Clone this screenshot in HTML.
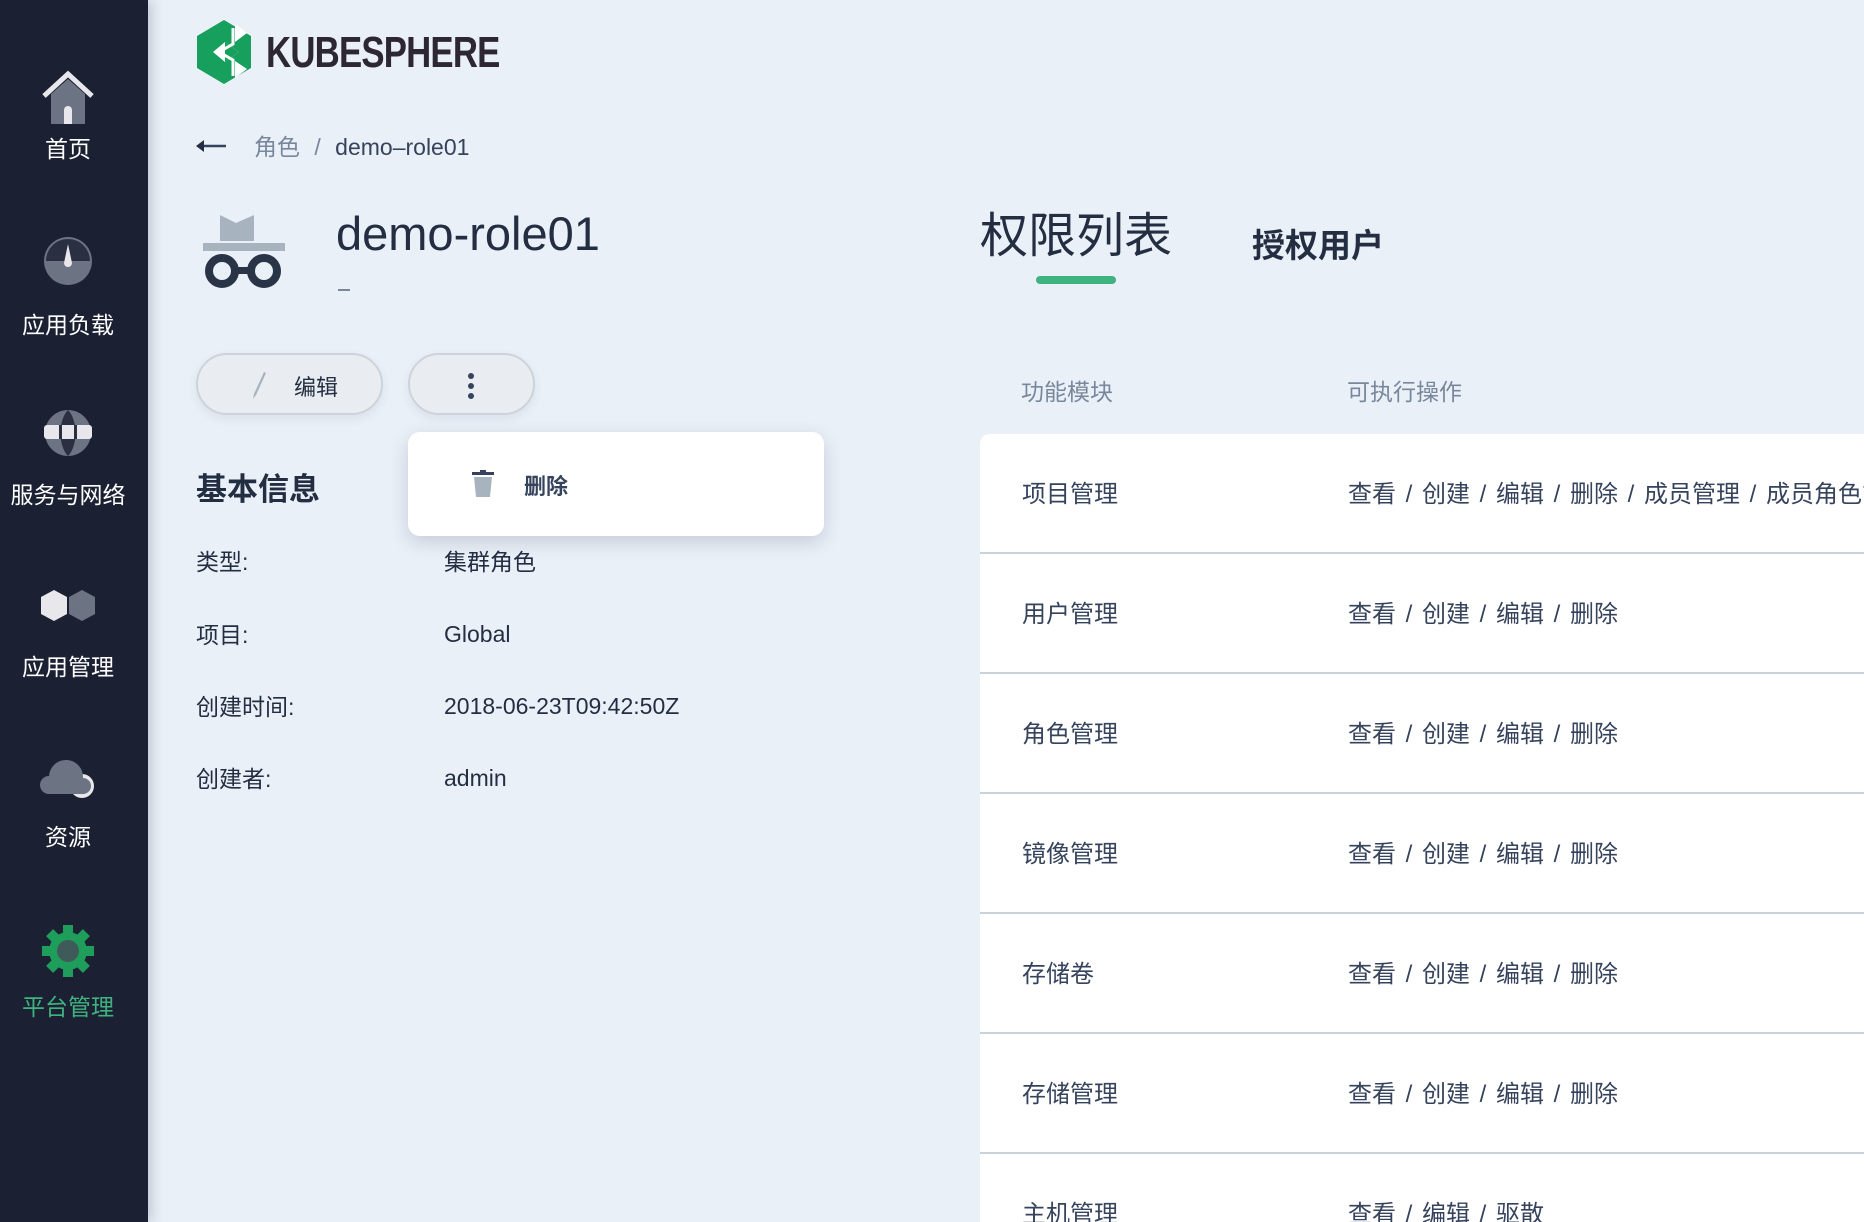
<!DOCTYPE html>
<html style="width:1864px;height:1222px;overflow:hidden"><head><meta charset="utf-8"><style>
*{margin:0;padding:0;box-sizing:border-box}
body{width:1864px;height:1222px;overflow:hidden;background:#eaf0f8;font-family:"Liberation Sans","Noto Sans CJK SC",sans-serif;color:#242e42;position:relative}
.side{position:absolute;left:0;top:0;width:148px;height:1222px;background:#1b2133;box-shadow:4px 0 12px rgba(30,40,60,.2)}
.nav{position:absolute;left:0;width:136px;text-align:center;color:#fff;font-size:23px}
.nav svg{display:block;margin:0 auto}
.a{position:absolute}
.btn{position:absolute;border:2px solid #ccd3db;border-radius:32px;background:#e9edf1;box-shadow:0 4px 10px rgba(36,46,66,.08)}
.lbl{position:absolute;left:196px;font-size:23px;color:#242e42}
.val{position:absolute;left:444px;font-size:23px;color:#242e42}
.card{position:absolute;left:980px;top:434px;width:900px;height:788px;background:#fff;border-radius:10px 0 0 0;overflow:hidden}
.row{position:absolute;left:0;width:900px;height:120px;border-bottom:2px solid #c9d1da}
.row span{position:absolute;top:40px;font-size:24px;color:#36435c;word-spacing:3px;white-space:nowrap}
</style></head><body>
<div class="side">
 <div class="nav" style="top:70px"><svg width="56" height="56" viewBox="0 0 56 56"><path d="M4 26 L28 4 L52 26" fill="none" stroke="#e8e8ec" stroke-width="5"/><path d="M11 24 L28 9 L45 24 V54 H11Z" fill="#6c7382"/><path d="M24 54 V40 a4 4 0 0 1 8 0 V54Z" fill="#e8e8ec"/></svg><div style="margin-top:4px">首页</div></div>
 <div class="nav" style="top:236px"><svg width="50" height="50" viewBox="0 0 50 50"><circle cx="25" cy="25" r="24" fill="#6c7382"/><path d="M3 25 a22 22 0 0 1 44 0Z" fill="#2a3042"/><path d="M25 8 L29 27 a4 4 0 0 1 -8 0Z" fill="#e8e8ec"/></svg><div style="margin-top:20px">应用负载</div></div>
 <div class="nav" style="top:408px"><svg width="52" height="50" viewBox="0 0 52 50"><circle cx="26" cy="25" r="23" fill="#6c7382"/><path d="M26 2 C16 12 16 38 26 48 C36 38 36 12 26 2Z" fill="#2a3042"/><rect x="2" y="17" width="48" height="14" rx="3" fill="#e8e8ec"/><rect x="17" y="17" width="3" height="14" fill="#2a3042"/><rect x="32" y="17" width="3" height="14" fill="#2a3042"/></svg><div style="margin-top:18px">服务与网络</div></div>
 <div class="nav" style="top:588px"><svg width="58" height="36" viewBox="0 0 58 36"><path d="M2 9 L15 2 L28 9 V26 L15 33 L2 26Z" fill="#e8e8ec"/><path d="M30 9 L43 2 L56 9 V26 L43 33 L30 26Z" fill="#6c7382"/></svg><div style="margin-top:24px">应用管理</div></div>
 <div class="nav" style="top:756px"><svg width="58" height="42" viewBox="0 0 58 42"><circle cx="43" cy="30" r="12" fill="#e8e8ec"/><path d="M10 38 a9 9 0 0 1 0 -18 a17 17 0 0 1 34 2 a8 8 0 0 1 0 16Z" fill="#6c7382"/></svg><div style="margin-top:20px">资源</div></div>
 <div class="nav" style="top:924px;color:#3fb37f"><svg width="54" height="54" viewBox="0 0 54 54"><g fill="#1e9e5a"><circle cx="27" cy="27" r="19"/><g id="t"><rect x="22" y="1" width="10" height="10"/><rect x="22" y="43" width="10" height="10"/></g><use href="#t" transform="rotate(45 27 27)"/><use href="#t" transform="rotate(90 27 27)"/><use href="#t" transform="rotate(135 27 27)"/></g><circle cx="27" cy="27" r="11" fill="#3e5b5a"/></svg><div style="margin-top:10px">平台管理</div></div>
</div>

<svg class="a" style="left:195px;top:20px" width="58" height="64" viewBox="0 0 58 64"><path d="M29 0 L56 16 V48 L29 64 L2 48 V16Z" fill="#17a05d"/><path d="M40 4 L52 13 L40 22Z M52 49 L40 58 V41Z M44 32 L30 22 L18 32 L30 42Z" fill="#fff"/><path d="M30 22 L44 32 L30 42Z" fill="#17a05d"/><path d="M38 8 V24 L24 32 L38 40 V56" fill="none" stroke="#fff" stroke-width="3"/></svg>
<div class="a" style="left:266px;top:28px;font-size:44px;font-weight:bold;color:#2d2734;letter-spacing:-1px;transform:scaleX(.79);transform-origin:left">KUBESPHERE</div>

<svg class="a" style="left:196px;top:139px" width="32" height="14"><path d="M2 7 H30" stroke="#36435c" stroke-width="2.5"/><path d="M0 7 L8 1 V13Z" fill="#242e42"/></svg>
<div class="a" style="left:254px;top:128px;font-size:23px;color:#79879c">角色 <span style="margin:0 8px">/</span> <span style="color:#36435c">demo–role01</span></div>

<svg class="a" style="left:202px;top:213px" width="84" height="76" viewBox="0 0 84 76"><path d="M18 2 L34 10 L52 2 V28 H18Z" fill="#a8b3c0"/><rect x="1" y="30" width="82" height="8" fill="#a8b3c0"/><circle cx="20" cy="58" r="13" fill="none" stroke="#2a3447" stroke-width="8"/><circle cx="62" cy="58" r="13" fill="none" stroke="#2a3447" stroke-width="8"/><rect x="32" y="54" width="18" height="7" fill="#2a3447"/></svg>
<div class="a" style="left:336px;top:206px;font-size:47px;color:#242e42">demo-role01</div>
<div class="a" style="left:338px;width:12px;height:2px;background:#79879c;top:289px"></div>

<div class="btn" style="left:196px;top:353px;width:187px;height:62px"><svg class="a" style="left:52px;top:16px" width="20" height="30"><path d="M16 2 L6 24 L3 28 L4 23 L14 1Z" fill="#a8b3c0"/></svg><span class="a" style="left:96px;top:15px;font-size:22px">编辑</span></div>
<div class="btn" style="left:408px;top:353px;width:127px;height:62px"><svg class="a" style="left:56px;top:16px" width="10" height="30"><circle cx="5" cy="5" r="3" fill="#36435c"/><circle cx="5" cy="15" r="3" fill="#36435c"/><circle cx="5" cy="25" r="3" fill="#36435c"/></svg></div>

<div class="a" style="left:196px;top:464px;font-size:31px;font-weight:bold">基本信息</div>
<div class="a" style="left:408px;top:432px;width:416px;height:104px;background:#fff;border-radius:12px;box-shadow:0 6px 18px rgba(36,46,66,.18)">
 <svg class="a" style="left:64px;top:38px" width="22" height="28"><rect x="0" y="2" width="22" height="3" fill="#36435c"/><rect x="8" y="0" width="6" height="3" fill="#36435c"/><path d="M2 7 H20 L18 27 H4Z" fill="#a8b3c0"/></svg>
 <span class="a" style="left:116px;top:37px;font-size:22px;font-weight:bold;color:#36435c">删除</span>
</div>

<div class="lbl" style="top:543px">类型:</div><div class="val" style="top:543px">集群角色</div>
<div class="lbl" style="top:616px">项目:</div><div class="val" style="top:621px">Global</div>
<div class="lbl" style="top:688px">创建时间:</div><div class="val" style="top:693px">2018-06-23T09:42:50Z</div>
<div class="lbl" style="top:760px">创建者:</div><div class="val" style="top:765px">admin</div>

<div class="a" style="left:980px;top:196px;font-size:48px;color:#242e42">权限列表</div>
<div class="a" style="left:1252px;top:219px;font-size:33px;font-weight:bold;color:#242e42">授权用户</div>
<div class="a" style="left:1036px;top:276px;width:80px;height:8px;border-radius:4px;background:#3fb37f"></div>
<div class="a" style="left:1021px;top:373px;font-size:23px;color:#79879c">功能模块</div>
<div class="a" style="left:1347px;top:373px;font-size:23px;color:#79879c">可执行操作</div>

<div class="card">
 <div class="row" style="top:0"><span style="left:42px">项目管理</span><span style="left:368px">查看 / 创建 / 编辑 / 删除 / 成员管理 / 成员角色管理</span></div>
 <div class="row" style="top:120px"><span style="left:42px">用户管理</span><span style="left:368px">查看 / 创建 / 编辑 / 删除</span></div>
 <div class="row" style="top:240px"><span style="left:42px">角色管理</span><span style="left:368px">查看 / 创建 / 编辑 / 删除</span></div>
 <div class="row" style="top:360px"><span style="left:42px">镜像管理</span><span style="left:368px">查看 / 创建 / 编辑 / 删除</span></div>
 <div class="row" style="top:480px"><span style="left:42px">存储卷</span><span style="left:368px">查看 / 创建 / 编辑 / 删除</span></div>
 <div class="row" style="top:600px"><span style="left:42px">存储管理</span><span style="left:368px">查看 / 创建 / 编辑 / 删除</span></div>
 <div class="row" style="top:720px;border:none"><span style="left:42px">主机管理</span><span style="left:368px">查看 / 编辑 / 驱散</span></div>
</div>
</body></html>
